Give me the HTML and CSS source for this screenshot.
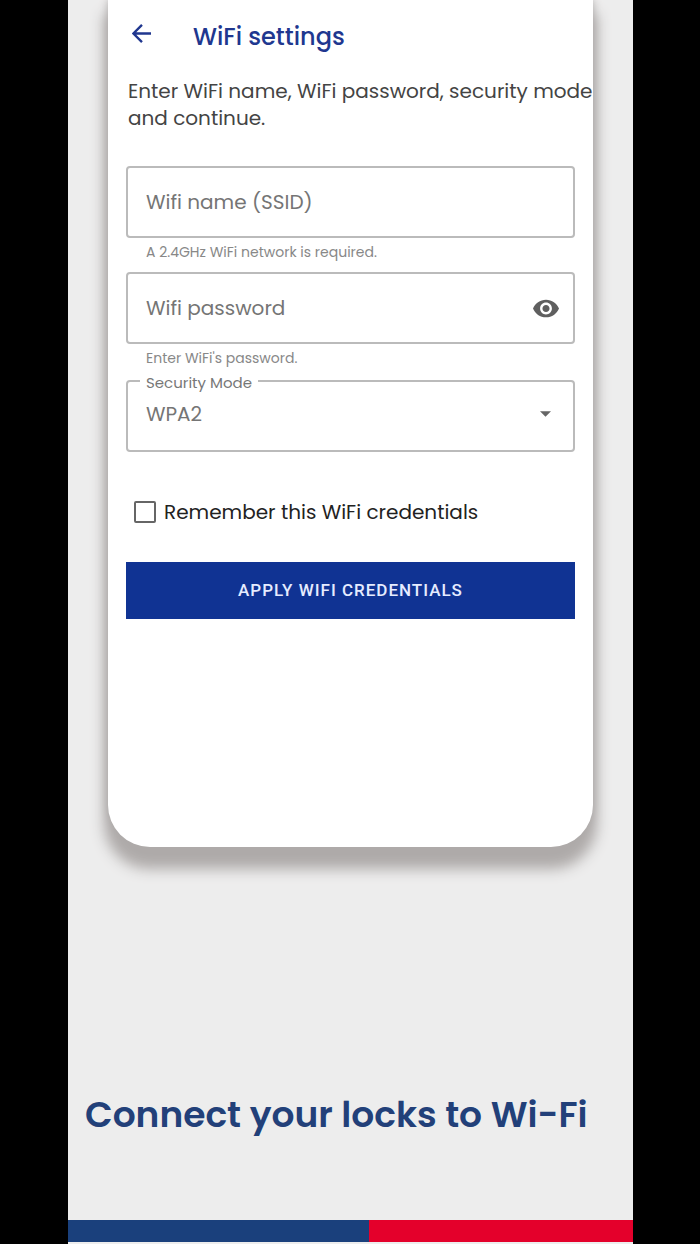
FILE: index.html
```html
<!DOCTYPE html>
<html lang="en">
<head>
    <meta charset="UTF-8">
    <meta name="viewport" content="width=device-width, initial-scale=1.0">
    <title>WiFi settings</title>
    <link rel="stylesheet" href="styles.css">
</head>
<body>
    <div class="stage">
        <main class="phone">
            <header class="app-bar">
                <button class="icon-button back" type="button" aria-label="Back">
                    <svg class="back-icon" viewBox="0 0 20 20">
                        <path d="M20 10H2M10.500 1L1.500 10l9 9" fill="none" stroke="currentColor" stroke-width="2.500"/>
                    </svg>
                </button>
                <h1 class="title">WiFi settings</h1>
            </header>
            <p class="intro">Enter WiFi name, WiFi password, security mode and continue.</p>

            <form class="form">
                <div class="field">
                    <input class="field-input" type="text" id="ssid" placeholder="Wifi name (SSID)" aria-label="Wifi name (SSID)">
                </div>
                <p class="helper">A 2.4GHz WiFi network is required.</p>

                <div class="field">
                    <input class="field-input" type="password" id="password" placeholder="Wifi password" aria-label="Wifi password">
                    <button class="icon-button" type="button" aria-label="Show password">
                        <svg class="eye-icon" viewBox="1 4 22 16">
                            <path d="M12 4.500C7 4.500 2.730 7.610 1 12c1.730 4.390 6 7.500 11 7.500s9.270-3.110 11-7.500c-1.730-4.390-6-7.500-11-7.500zM12 17c-2.760 0-5-2.240-5-5s2.240-5 5-5 5 2.240 5 5-2.240 5-5 5zm0-8c-1.660 0-3 1.340-3 3s1.340 3 3 3 3-1.340 3-3-1.340-3-3-3z" fill="currentColor"/>
                        </svg>
                    </button>
                </div>
                <p class="helper">Enter WiFi's password.</p>

                <fieldset class="outlined">
                    <legend class="legend"><label for="security">Security Mode</label></legend>
                    <select class="select" id="security">
                        <option>WPA2</option>
                        <option>WPA</option>
                        <option>WEP</option>
                    </select>
                    <svg class="caret" viewBox="0 0 10 5">
                        <path d="M0 0h10L5 5z" fill="currentColor"/>
                    </svg>
                </fieldset>

                <div class="remember">
                    <input class="checkbox" type="checkbox" id="remember">
                    <label for="remember">Remember this WiFi credentials</label>
                </div>

                <button class="apply" type="button">APPLY WIFI CREDENTIALS</button>
            </form>
        </main>

        <h2 class="caption">Connect your locks to Wi-Fi</h2>
        <div class="stripe">
            <div class="stripe-blue"></div>
            <div class="stripe-red"></div>
        </div>
    </div>
</body>
</html>
```
FILE: styles.css
```css
* {
    box-sizing: border-box;
}

body {
    margin: 0;
    background-color: #000;
    font-family: Poppins, Inter, sans-serif;
}

.stage {
    display: flex;
    flex-direction: column;
    min-height: 100vh;
    margin: 0 67px 0 68px;
    padding-bottom: 2px;
    background-color: #ededed;
}

.phone {
    margin: 0 40px;
    padding: 16px 0 228px;
    background-color: #fff;
    border-radius: 0 0 42px 42px;
    box-shadow: 0 18px 14px 4px #aeaaa9, 0 0 8px #aeaaa9;
}

.app-bar {
    display: flex;
    align-items: flex-start;
    gap: 42px;
    padding-left: 24px;
    color: #20378f;
}

.icon-button {
    display: flex;
    padding: 0;
    border: none;
    background: none;
    color: inherit;
    cursor: pointer;
}

.back {
    padding-top: 8px;
}

.back-icon {
    width: 19px;
    height: 19px;
}

.title {
    margin: 0;
    font-size: 24px;
    font-weight: 500;
    line-height: 42px;
}

/* first line runs right up to the card edge */
.intro {
    margin: 20px -4px 0 0;
    padding-left: 20px;
    color: #444;
    font-size: 20px;
    line-height: 27px;
}

.form {
    display: flex;
    flex-direction: column;
    margin: 34px 18px 0;
}

.field {
    display: flex;
    align-items: center;
    height: 72px;
    padding: 0 14px 0 18px;
    border: 2px solid #bbb;
    border-radius: 4px;
    color: #5f5f5f;
}

.field-input {
    flex: 1;
    min-width: 0;
    padding: 0;
    border: none;
    outline: none;
    background: none;
    color: #757575;
    font: inherit;
    font-size: 20px;
}

.field-input::placeholder {
    color: #757575;
}

.eye-icon {
    width: 26px;
    height: 19px;
}

.helper {
    height: 34px;
    margin: 0;
    padding: 4px 20px 0;
    color: #888;
    font-size: 14px;
    line-height: 20px;
}

.outlined {
    display: flex;
    align-items: center;
    height: 82px;
    margin: 0;
    margin-top: -8px;
    padding: 8px 22px 0 18px;
    border: 2px solid #bbb;
    border-radius: 4px;
    color: #666;
}

.legend {
    margin-left: -6px;
    padding: 4px 6px 0;
    color: #777;
    font-size: 15px;
    line-height: 18px;
}

.select {
    flex: 1;
    padding: 0;
    border: none;
    outline: none;
    background: none;
    appearance: none;
    color: #757575;
    font: inherit;
    font-size: 20px;
}

.caret {
    width: 11px;
    height: 6px;
}

.remember {
    display: flex;
    align-items: center;
    gap: 8px;
    margin-top: 46px;
    padding-left: 8px;
    color: #222;
    font-size: 20px;
    line-height: 28px;
}

.checkbox {
    width: 22px;
    height: 22px;
    margin: 0;
    border: 2px solid #666;
    border-radius: 2px;
    appearance: none;
}

.checkbox:checked {
    background-color: #103393;
}

.apply {
    margin-top: 36px;
    padding: 0;
    border: none;
    background-color: #103393;
    color: #e6ecff;
    font-family: Roboto, sans-serif;
    font-size: 17px;
    font-weight: 500;
    letter-spacing: 1px;
    line-height: 57px;
    cursor: pointer;
}

.caption {
    margin: auto 17px 80px;
    color: #224079;
    font-size: 36px;
    font-weight: 600;
    line-height: 50px;
}

.stripe {
    display: flex;
    height: 22px;
}

.stripe-blue {
    flex: 8;
    background-color: #1a407c;
}

.stripe-red {
    flex: 7;
    background-color: #e4002b;
}
```
